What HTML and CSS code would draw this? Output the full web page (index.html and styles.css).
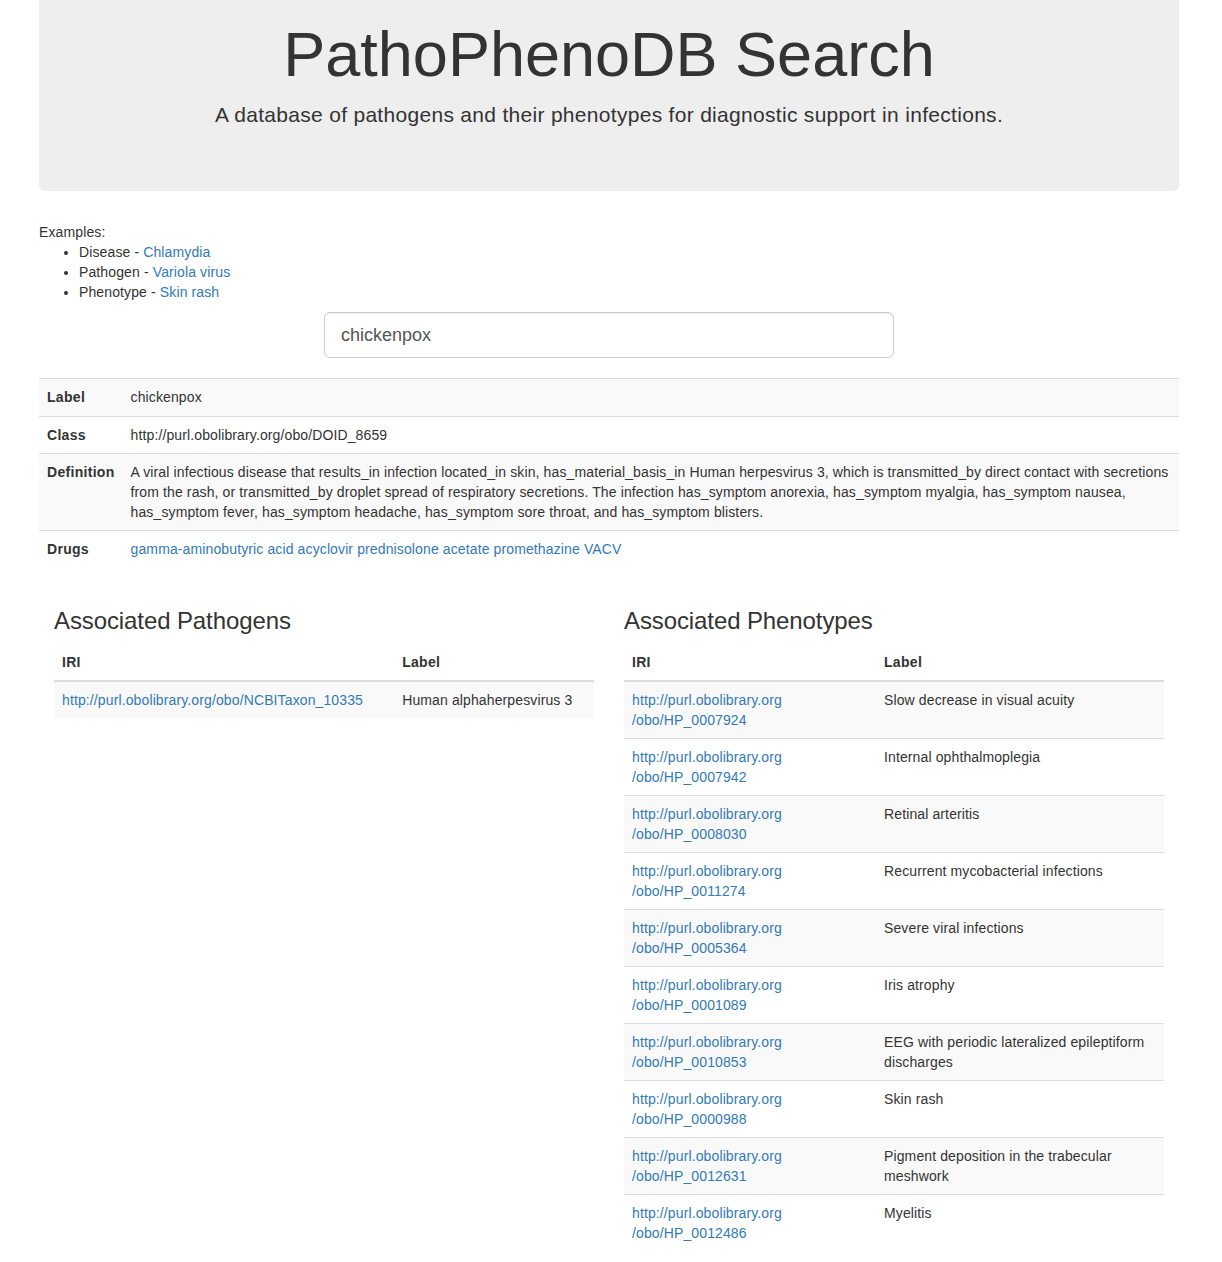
FILE: index.html
```html
<!DOCTYPE html>
<html lang="en">
<head>
<meta charset="utf-8">
<title>PathoPhenoDB Search</title>
<link rel="stylesheet" href="styles.css">
</head>
<body>
<div class="page">
  <header class="jumbotron">
    <h1>PathoPhenoDB Search</h1>
    <p>A database of pathogens and their phenotypes for diagnostic support in infections.</p>
  </header>

  <div class="examples">
    Examples:
    <ul>
      <li>Disease - <a href="#">Chlamydia</a></li>
      <li>Pathogen - <a href="#">Variola virus</a></li>
      <li>Phenotype - <a href="#">Skin rash</a></li>
    </ul>
  </div>

  <div class="search-row">
    <input class="search" type="text" value="chickenpox">
  </div>

  <table class="table table-striped details">
    <tbody>
      <tr class="first"><th>Label</th><td>chickenpox</td></tr>
      <tr><th>Class</th><td>http://purl.obolibrary.org/obo/DOID_8659</td></tr>
      <tr><th>Definition</th><td>A viral infectious disease that results_in infection located_in skin, has_material_basis_in Human herpesvirus 3, which is transmitted_by direct contact with secretions from the rash, or transmitted_by droplet spread of respiratory secretions. The infection has_symptom anorexia, has_symptom myalgia, has_symptom nausea, has_symptom fever, has_symptom headache, has_symptom sore throat, and has_symptom blisters.</td></tr>
      <tr><th>Drugs</th><td><a href="#">gamma-aminobutyric acid</a> <a href="#">acyclovir</a> <a href="#">prednisolone acetate</a> <a href="#">promethazine</a> <a href="#">VACV</a></td></tr>
    </tbody>
  </table>

  <div class="assoc">
    <section class="col">
      <h3>Associated Pathogens</h3>
      <table class="table table-striped">
        <thead><tr><th>IRI</th><th>Label</th></tr></thead>
        <tbody>
          <tr><td><a href="#">http://purl.obolibrary.org/obo/NCBITaxon_10335</a></td><td>Human alphaherpesvirus 3</td></tr>
        </tbody>
      </table>
    </section>
    <section class="col">
      <h3>Associated Phenotypes</h3>
      <table class="table table-striped pheno">
        <thead><tr><th class="iri">IRI</th><th>Label</th></tr></thead>
        <tbody>
          <tr><td><a href="#">http://purl.obolibrary.org<br>/obo/HP_0007924</a></td><td>Slow decrease in visual acuity</td></tr>
          <tr><td><a href="#">http://purl.obolibrary.org<br>/obo/HP_0007942</a></td><td>Internal ophthalmoplegia</td></tr>
          <tr><td><a href="#">http://purl.obolibrary.org<br>/obo/HP_0008030</a></td><td>Retinal arteritis</td></tr>
          <tr><td><a href="#">http://purl.obolibrary.org<br>/obo/HP_0011274</a></td><td>Recurrent mycobacterial infections</td></tr>
          <tr><td><a href="#">http://purl.obolibrary.org<br>/obo/HP_0005364</a></td><td>Severe viral infections</td></tr>
          <tr><td><a href="#">http://purl.obolibrary.org<br>/obo/HP_0001089</a></td><td>Iris atrophy</td></tr>
          <tr><td><a href="#">http://purl.obolibrary.org<br>/obo/HP_0010853</a></td><td>EEG with periodic lateralized epileptiform discharges</td></tr>
          <tr><td><a href="#">http://purl.obolibrary.org<br>/obo/HP_0000988</a></td><td>Skin rash</td></tr>
          <tr><td><a href="#">http://purl.obolibrary.org<br>/obo/HP_0012631</a></td><td>Pigment deposition in the trabecular meshwork</td></tr>
          <tr><td><a href="#">http://purl.obolibrary.org<br>/obo/HP_0012486</a></td><td>Myelitis</td></tr>
        </tbody>
      </table>
    </section>
  </div>
</div>
</body>
</html>
```
FILE: styles.css
```css
* { box-sizing: border-box; }

html, body {
  margin: 0;
  padding: 0;
  background: #fff;
}

body {
  font-family: "Liberation Sans", Arial, Helvetica, sans-serif;
  font-size: 14px;
  line-height: 20px;
  letter-spacing: 0.12px;
  color: #333;
}

a {
  color: #337ab7;
  text-decoration: none;
}

.page {
  width: 1140px;
  margin: 0 0 0 39px;
}

.jumbotron {
  background: #eee;
  border-radius: 0 0 6px 6px;
  text-align: center;
  padding: 20px 60px 61px;
  margin-bottom: 31px;
}

.jumbotron h1 {
  margin: 0;
  font-size: 63px;
  line-height: 69px;
  font-weight: 400;
  letter-spacing: 0;
  color: #333;
}

.jumbotron p {
  margin: 11px 0 0;
  font-size: 21px;
  line-height: 30px;
  letter-spacing: 0.3px;
  font-weight: 400;
}

.examples ul {
  margin: 0 0 10px;
  padding-left: 40px;
}

.search-row {
  display: flex;
  justify-content: center;
  margin-bottom: 20px;
}

.search {
  width: 570px;
  height: 46px;
  padding: 10px 16px;
  font-family: inherit;
  font-size: 18px;
  line-height: 1.33;
  color: #555;
  background: #fff;
  border: 1px solid #ccc;
  border-radius: 6px;
  box-shadow: inset 0 1px 1px rgba(0,0,0,.075);
  outline: none;
}

.table {
  width: 100%;
  border-collapse: collapse;
  border-spacing: 0;
  margin-bottom: 20px;
}

.table th,
.table td {
  padding: 8px;
  line-height: 20px;
  vertical-align: top;
  border-top: 1px solid #ddd;
  text-align: left;
}

.table th {
  font-weight: 700;
  letter-spacing: 0.3px;
}

.table thead th {
  vertical-align: bottom;
  border-top: 0;
  border-bottom: 2px solid #ddd;
}

.table-striped tbody tr:nth-of-type(odd) {
  background: #f9f9f9;
}

.details th {
  white-space: nowrap;
}

.details .first th,
.details .first td {
  padding-bottom: 9px;
}

.assoc {
  display: grid;
  grid-template-columns: 1fr 1fr;
}

.col {
  padding: 0 15px;
}

.col h3 {
  margin: 21px 0 10px;
  font-size: 24px;
  line-height: 26.4px;
  font-weight: 400;
  letter-spacing: -0.1px;
}

.pheno th.iri {
  width: 252px;
}
```
